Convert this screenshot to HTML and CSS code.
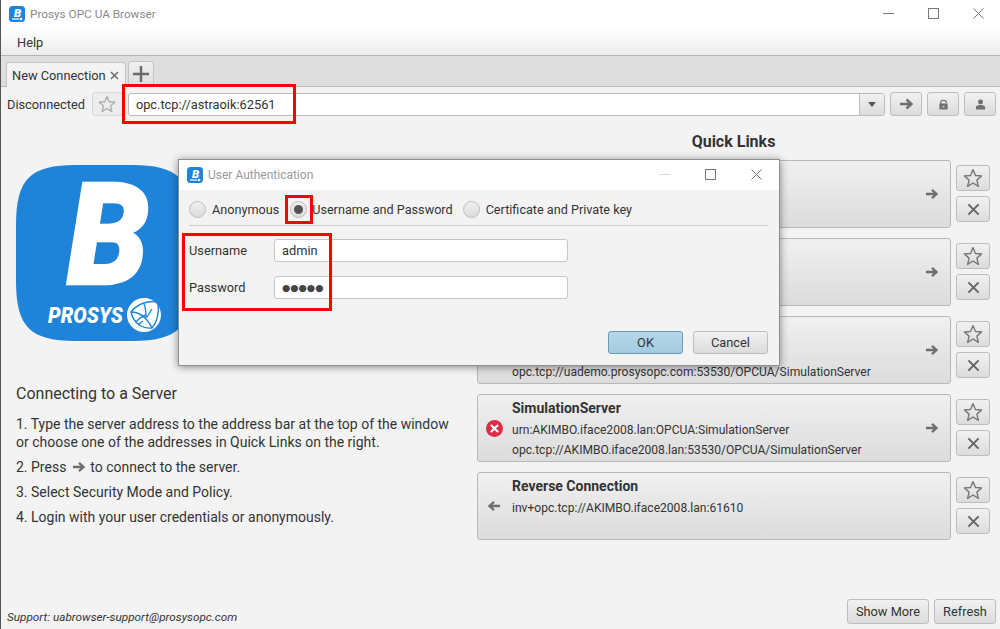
FILE: index.html
```html
<!DOCTYPE html>
<html lang="en">
<head>
<meta charset="utf-8">
<title>Prosys OPC UA Browser</title>
<link rel="stylesheet" href="styles.css">
</head>
<body>
<svg class="sprite" width="0" height="0" aria-hidden="true">
  <symbol id="i-arrow" viewBox="0 0 14 12"><path d="M1 6H12M7.5 1.5L12.5 6L7.5 10.5" fill="none" stroke="currentColor" stroke-width="2.5"/></symbol>
  <symbol id="i-back" viewBox="0 0 14 12"><path d="M13 6H2M6.5 1.5L1.5 6L6.5 10.5" fill="none" stroke="currentColor" stroke-width="2.5"/></symbol>
  <symbol id="i-star" viewBox="0 0 20 20"><path d="M10 1.6L12.4 7.5L18.6 8L13.9 12.1L15.4 18.4L10 15L4.6 18.4L6.1 12.1L1.4 8L7.6 7.5Z" fill="none" stroke="currentColor" stroke-width="1.4" stroke-linejoin="round"/></symbol>
  <symbol id="i-x" viewBox="0 0 14 14"><path d="M1.5 1.5L12.5 12.5M12.5 1.5L1.5 12.5" fill="none" stroke="currentColor" stroke-width="2.2"/></symbol>
  <symbol id="i-lock" viewBox="0 0 12 12"><path d="M3 5.5V3.5C3 .8 9 .8 9 3.5V4.5" fill="none" stroke="currentColor" stroke-width="1.3"/><path d="M1.5 5H10.5V11.5H1.5Z M5 7.6V9H7V7.6Z" fill="currentColor" fill-rule="evenodd"/></symbol>
  <symbol id="i-user" viewBox="0 0 12 12"><circle cx="6" cy="3.2" r="2.7" fill="currentColor"/><path d="M1 11.5V9.2C1 7.4 3 6.6 6 6.6C9 6.6 11 7.4 11 9.2V11.5Z" fill="currentColor"/></symbol>
  <symbol id="i-app" viewBox="0 0 16 16"><rect width="16" height="16" rx="3.5" fill="#1f84d9"/><text x="8.6" y="10.6" text-anchor="middle" font-family="Roboto" font-weight="900" font-style="italic" font-size="11.5" fill="#fff">B</text><rect x="3" y="12.4" width="7" height="1.2" fill="#fff"/><circle cx="12" cy="13" r="1.3" fill="#fff"/></symbol>
</svg>

<div class="app">
  <header class="titlebar">
    <svg class="app-icon"><use href="#i-app"/></svg>
    <span class="title-text">Prosys OPC UA Browser</span>
    <div class="win-controls">
      <svg class="wc" viewBox="0 0 11 11"><path d="M0 5.5H11" stroke="#777" fill="none"/></svg>
      <svg class="wc" viewBox="0 0 11 11"><rect x=".5" y=".5" width="10" height="10" stroke="#777" fill="none"/></svg>
      <svg class="wc" viewBox="0 0 11 11"><path d="M.5 .5L10.5 10.5M10.5 .5L.5 10.5" stroke="#777" fill="none"/></svg>
    </div>
  </header>
  <nav class="menubar"><span class="menu-item">Help</span></nav>
  <div class="tabbar">
    <div class="tab"><span>New Connection</span><svg class="tab-x"><use href="#i-x"/></svg></div>
    <div class="tab tab-add"><svg class="plus" viewBox="0 0 14 14"><path d="M7 0V14M0 7H14" stroke="#6b6b6b" stroke-width="2.2"/></svg></div>
  </div>
  <div class="toolbar">
    <span class="status">Disconnected</span>
    <button class="btn btn-star"><svg class="ico-star pale"><use href="#i-star"/></svg></button>
    <div class="address">
      <span class="address-text">opc.tcp://astraoik:62561</span>
      <span class="address-caret"></span>
    </div>
    <button class="btn tool"><svg class="ico-arrow"><use href="#i-arrow"/></svg></button>
    <button class="btn tool"><svg class="ico-small"><use href="#i-lock"/></svg></button>
    <button class="btn tool"><svg class="ico-small"><use href="#i-user"/></svg></button>
  </div>

  <main class="main">
    <section class="intro">
      <svg class="logo" viewBox="0 0 176 176">
        <path d="M0 60C0 14 14 0 60 0H116C162 0 176 14 176 60V116C176 162 162 176 116 176H60C14 176 0 162 0 116Z" fill="#1f84d9"/>
        <text x="51" y="119" font-family="Roboto" font-weight="900" font-style="italic" font-size="143" fill="#fff" stroke="#fff" stroke-width="2.5" textLength="82" lengthAdjust="spacingAndGlyphs">B</text>
        <text x="32" y="158" font-family="Roboto" font-weight="900" font-style="italic" font-size="22" fill="#fff" textLength="75" lengthAdjust="spacingAndGlyphs">PROSYS</text>
        <circle cx="128" cy="150" r="17" fill="#fff"/>
        <path d="M115 147C121 139 132 135 142 137C143 146 142 156 136 163C128 164 118 160 115 147ZM115 147C122 147 130 151 136 163M128 139C130 143 130 148 130 153M120 157C123 153 127 151 130 150M136 144L131 152M122 160L127 156" fill="none" stroke="#1f84d9" stroke-width="1.4"/>
      </svg>
      <h2 class="intro-title">Connecting to a Server</h2>
      <p class="step">1. Type the server address to the address bar at the top of the window<br>or choose one of the addresses in Quick Links on the right.</p>
      <p class="step">2. Press <svg class="ico-inline"><use href="#i-arrow"/></svg> to connect to the server.</p>
      <p class="step">3. Select Security Mode and Policy.</p>
      <p class="step">4. Login with your user credentials or anonymously.</p>
    </section>

    <section class="links">
      <h2 class="links-title">Quick Links</h2>
      <div class="link-row">
        <div class="card"><span class="card-icon"></span><div class="card-text"></div><svg class="ico-arrow"><use href="#i-arrow"/></svg></div>
        <div class="side"><button class="btn side-btn"><svg class="ico-star"><use href="#i-star"/></svg></button><button class="btn side-btn"><svg class="ico-x"><use href="#i-x"/></svg></button></div>
      </div>
      <div class="link-row">
        <div class="card"><span class="card-icon"></span><div class="card-text"></div><svg class="ico-arrow"><use href="#i-arrow"/></svg></div>
        <div class="side"><button class="btn side-btn"><svg class="ico-star"><use href="#i-star"/></svg></button><button class="btn side-btn"><svg class="ico-x"><use href="#i-x"/></svg></button></div>
      </div>
      <div class="link-row">
        <div class="card"><span class="card-icon"></span><div class="card-text card-text-end"><div class="card-line">opc.tcp://uademo.prosysopc.com:53530/OPCUA/SimulationServer</div></div><svg class="ico-arrow"><use href="#i-arrow"/></svg></div>
        <div class="side"><button class="btn side-btn"><svg class="ico-star"><use href="#i-star"/></svg></button><button class="btn side-btn"><svg class="ico-x"><use href="#i-x"/></svg></button></div>
      </div>
      <div class="link-row">
        <div class="card">
          <span class="card-icon"><svg class="err" viewBox="0 0 16 16"><circle cx="8" cy="8" r="8" fill="#dc2c47"/><path d="M4.6 4.6L11.4 11.4M11.4 4.6L4.6 11.4" stroke="#fff" stroke-width="2"/></svg></span>
          <div class="card-text">
            <div class="card-name">SimulationServer</div>
            <div class="card-line">urn:AKIMBO.iface2008.lan:OPCUA:SimulationServer</div>
            <div class="card-line">opc.tcp://AKIMBO.iface2008.lan:53530/OPCUA/SimulationServer</div>
          </div>
          <svg class="ico-arrow"><use href="#i-arrow"/></svg>
        </div>
        <div class="side"><button class="btn side-btn"><svg class="ico-star"><use href="#i-star"/></svg></button><button class="btn side-btn"><svg class="ico-x"><use href="#i-x"/></svg></button></div>
      </div>
      <div class="link-row">
        <div class="card">
          <span class="card-icon"><svg class="ico-arrow"><use href="#i-back"/></svg></span>
          <div class="card-text">
            <div class="card-name">Reverse Connection</div>
            <div class="card-line">inv+opc.tcp://AKIMBO.iface2008.lan:61610</div>
            <div class="card-line"></div>
          </div>
        </div>
        <div class="side"><button class="btn side-btn"><svg class="ico-star"><use href="#i-star"/></svg></button><button class="btn side-btn"><svg class="ico-x"><use href="#i-x"/></svg></button></div>
      </div>
    </section>
  </main>

  <footer class="footer">
    <span class="support">Support: uabrowser-support@prosysopc.com</span>
    <button class="btn foot-btn foot-more">Show More</button>
    <button class="btn foot-btn foot-refresh">Refresh</button>
  </footer>
</div>

<div class="dialog">
  <header class="dlg-title">
    <svg class="app-icon"><use href="#i-app"/></svg>
    <span class="dlg-title-text">User Authentication</span>
    <div class="dlg-controls">
      <svg class="wc" viewBox="0 0 11 11"><path d="M0 5.5H11" stroke="#ddd" fill="none"/></svg>
      <svg class="wc" viewBox="0 0 11 11"><rect x=".5" y=".5" width="10" height="10" stroke="#777" fill="none"/></svg>
      <svg class="wc" viewBox="0 0 11 11"><path d="M.5 .5L10.5 10.5M10.5 .5L.5 10.5" stroke="#777" fill="none"/></svg>
    </div>
  </header>
  <div class="dlg-body">
    <div class="radios">
      <span class="radio"></span><span class="radio-label r1">Anonymous</span>
      <span class="radio radio-on"></span><span class="radio-label r2">Username and Password</span>
      <span class="radio"></span><span class="radio-label">Certificate and Private key</span>
    </div>
    <div class="form">
      <label class="form-label">Username</label><div class="field">admin</div>
      <label class="form-label">Password</label><div class="field field-pass">●●●●●</div>
    </div>
    <div class="dlg-actions">
      <button class="btn dlg-btn dlg-ok">OK</button>
      <button class="btn dlg-btn">Cancel</button>
    </div>
  </div>
</div>

<div class="mark mark-address"></div>
<div class="mark mark-radio"></div>
<div class="mark mark-form"></div>
</body>
</html>
```
FILE: styles.css
```css
* { box-sizing: border-box; }
html, body { margin: 0; padding: 0; }
body {
  width: 1000px; height: 629px; overflow: hidden; position: relative;
  font-family: Roboto, "Liberation Sans", sans-serif; font-size: 12.8px; color: #333;
  background: #f3f3f3;
}
.sprite { position: absolute; }
.app { height: 629px; display: flex; flex-direction: column; border-left: 1px solid #555; }

.titlebar { height: 28px; flex: none; background: #fff; display: flex; align-items: center; padding-left: 8px; }
.app-icon { width: 16px; height: 16px; flex: none; }
.title-text { margin-left: 5px; font-size: 11.75px; color: #8a8a8a; }
.win-controls { margin-left: auto; display: flex; gap: 34px; padding: 0 16px 2px 0; }
.wc { width: 11px; height: 11px; display: block; }

.menubar { height: 28px; flex: none; background: linear-gradient(#fff, #ececec); border-bottom: 1px solid #b4b4b4; display: flex; align-items: center; padding: 2px 0 0 16px; }
.menu-item { font-size: 12.8px; color: #333; }

.tabbar { height: 31px; flex: none; background: #dedede; border-bottom: 1px solid #b8b8b8; display: flex; align-items: flex-end; gap: 2px; padding-left: 5px; }
.tab { height: 25px; width: 120px; margin-bottom: -1px; background: #f3f3f3; border: 1px solid #c4c4c4; border-bottom: none; border-radius: 3px 3px 0 0; display: flex; align-items: center; padding-left: 5px; font-size: 12.8px; }
.tab-x { width: 9px; height: 9px; margin-left: 4px; color: #666; }
.tab-add { width: 26px; padding: 0; justify-content: center; background: linear-gradient(#f0f0f0, #dedede); margin-bottom: 0; }
.plus { width: 16px; height: 16px; }

.btn { font-family: inherit; color: #333; background: linear-gradient(#f1f1f1, #dcdcdc); border: 1px solid #bdbdbd; border-radius: 3px; padding: 0; display: flex; align-items: center; justify-content: center; }

.toolbar { height: 38px; flex: none; display: flex; align-items: flex-start; padding: 5px 4px 0 6px; }
.status { width: 85px; line-height: 25px; font-size: 12.8px; }
.btn-star { width: 31px; height: 24px; background: #ededed; border-color: #d8d8d8; margin-right: 5px; }
.ico-star { width: 20px; height: 20px; color: #777; }
.ico-star.pale { width: 18px; height: 18px; color: #aaa; }
.address { width: 758px; height: 23px; margin-top: 1px; background: #fff; border: 1px solid #bcbcbc; border-radius: 3px; display: flex; align-items: center; justify-content: space-between; padding-left: 7px; font-size: 12.8px; position: relative; }
.address-caret { width: 25px; height: 21px; background: linear-gradient(#f1f1f1, #dcdcdc); border-left: 1px solid #bcbcbc; position: relative; }
.address-caret::after { content: ""; position: absolute; left: 8px; top: 8px; border: 4px solid transparent; border-top: 5px solid #555; border-bottom: 0; }
.tool { width: 32px; height: 24px; margin-left: 5px; }
.ico-arrow { width: 13px; height: 12px; color: #6e6e6e; flex: none; display: block; }
.tool .ico-arrow { width: 14px; height: 12px; }
.ico-small { width: 11px; height: 11px; color: #707070; }

.main { flex: 1; min-height: 0; display: flex; }
.intro { width: 476px; flex: none; padding: 40px 0 0 15px; }
.logo { width: 176px; height: 176px; display: block; }
.intro-title { font-size: 16px; font-weight: 400; line-height: 20px; margin: 43px 0 11px; color: #333; }
.step { margin: 0 0 7px; font-size: 14px; line-height: 18px; }
.ico-inline { width: 13px; height: 12px; color: #6e6e6e; vertical-align: -1px; margin: 0 2px; }

.links { width: 514px; flex: none; }
.links-title { font-size: 16px; font-weight: 700; line-height: 20px; text-align: center; margin: 7px 0 8px; padding-right: 1px; color: #333; }
.link-row { display: flex; margin-bottom: 10px; }
.card { width: 474px; height: 68px; flex: none; background: linear-gradient(#f0f0f0, #dcdcdc); border: 1px solid #b8b8b8; border-radius: 3px; display: flex; align-items: center; padding-right: 12px; }
.card-icon { width: 34px; flex: none; display: flex; justify-content: center; padding-right: 2px; }
.err { width: 17px; height: 17px; display: block; }
.card-text { flex: 1; align-self: stretch; padding-top: 4px; }
.card-text-end { display: flex; align-items: flex-end; padding-bottom: 1px; }
.card-name { font-size: 14px; font-weight: 700; line-height: 18px; color: #333; margin-bottom: 3px; }
.card-line { font-size: 12.07px; line-height: 20px; color: #333; }
.side { width: 34px; margin-left: 5px; padding-top: 5px; display: flex; flex-direction: column; gap: 5px; flex: none; }
.side-btn { width: 34px; height: 26px; }
.ico-x { width: 13px; height: 13px; color: #666; }

.footer { height: 36px; flex: none; display: flex; align-items: flex-start; padding: 6px 4px 0 0; }
.support { font-size: 11.75px; font-style: italic; margin: 11px auto 0 6px; color: #333; }
.foot-btn { height: 25px; font-size: 12.8px; }
.foot-more { width: 82px; margin-right: 5px; }
.foot-refresh { width: 62px; }

.dialog { position: absolute; left: 178px; top: 159px; width: 602px; height: 207px; background: #f3f3f3; border: 1px solid #8f8f8f; box-shadow: 0 1px 8px rgba(0,0,0,.45); display: flex; flex-direction: column; }
.dlg-title { height: 30px; flex: none; background: #fff; display: flex; align-items: center; padding-left: 8px; }
.dlg-title-text { margin-left: 5px; font-size: 12px; color: #9a9a9a; }
.dlg-controls { margin-left: auto; display: flex; gap: 35px; padding: 0 17px 2px 0; }
.dlg-body { flex: 1; display: flex; flex-direction: column; padding: 0 11px 0 10px; }
.radios { height: 36px; flex: none; display: flex; align-items: center; border-bottom: 1px solid #cfcfcf; font-size: 12.65px; padding-top: 3px; }
.radio { width: 17px; height: 17px; flex: none; border-radius: 50%; border: 1px solid #bdbdbd; background: linear-gradient(#f0f0f0, #dcdcdc); position: relative; margin-right: 6px; }
.radio-on { margin-right: 5px; }
.radio-on::after { content: ""; position: absolute; left: 3px; top: 3px; width: 9px; height: 9px; border-radius: 50%; background: #555; }
.radio-label { line-height: 17px; }
.r1 { margin-right: 11px; }
.r2 { margin-right: 10px; }
.form { display: grid; grid-template-columns: 85px 294px; row-gap: 14px; align-items: center; margin-top: 13px; font-size: 12.8px; }
.form-label { color: #333; }
.field { height: 23px; background: #fff; border: 1px solid #c6c6c6; border-radius: 3px; padding-left: 7px; line-height: 21px; font-size: 12.8px; }
.field-pass { font-family: "DejaVu Sans", sans-serif; font-size: 9.5px; color: #444; }
.dlg-actions { margin-top: 32px; display: flex; justify-content: flex-end; gap: 10px; }
.dlg-btn { width: 75px; height: 23px; font-size: 12.8px; }
.dlg-ok { background: linear-gradient(#b6d7e8, #a3cbe1); border-color: #6b9ab5; }

.mark { position: absolute; border: 3px solid #f00; }
.mark-address { left: 122px; top: 84px; width: 174px; height: 40px; }
.mark-radio { left: 285px; top: 195px; width: 28px; height: 29px; }
.mark-form { left: 182px; top: 233px; width: 150px; height: 78px; }
```
